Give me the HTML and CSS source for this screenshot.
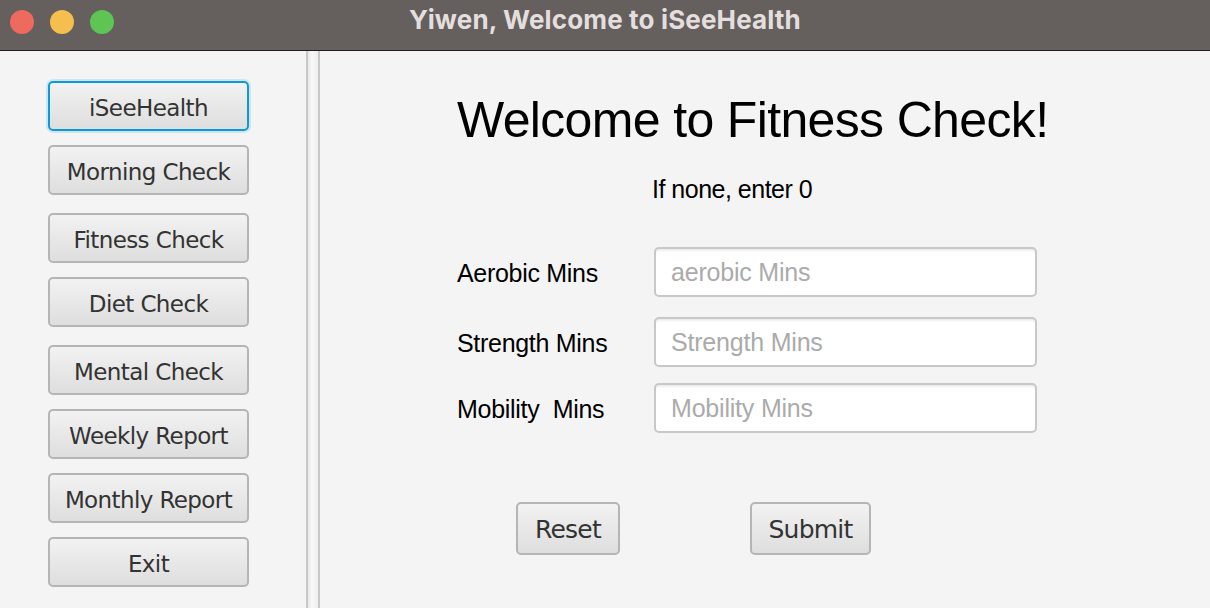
FILE: index.html
```html
<!DOCTYPE html>
<html>
<head>
<meta charset="utf-8">
<link rel="stylesheet" href="styles.css">
</head>
<body>
<div class="window">
  <header class="titlebar">
    <div class="lights">
      <span class="light red"></span>
      <span class="light yellow"></span>
      <span class="light green"></span>
    </div>
    <div class="title">Yiwen, Welcome to iSeeHealth</div>
  </header>
  <div class="body">
    <nav class="sidebar">
      <button class="nav-btn focused">iSeeHealth</button>
      <button class="nav-btn">Morning Check</button>
      <button class="nav-btn wide-gap">Fitness Check</button>
      <button class="nav-btn">Diet Check</button>
      <button class="nav-btn wide-gap">Mental Check</button>
      <button class="nav-btn">Weekly Report</button>
      <button class="nav-btn">Monthly Report</button>
      <button class="nav-btn">Exit</button>
    </nav>
    <div class="divider"></div>
    <main class="main">
      <h1 class="heading">Welcome to Fitness Check!</h1>
      <p class="hint">If none, enter 0</p>
      <div class="form">
        <div class="row">
          <label class="label">Aerobic Mins</label>
          <input class="field" placeholder="aerobic Mins">
        </div>
        <div class="row gap-20">
          <label class="label">Strength Mins</label>
          <input class="field" placeholder="Strength Mins">
        </div>
        <div class="row gap-16">
          <label class="label">Mobility&nbsp; Mins</label>
          <input class="field" placeholder="Mobility Mins">
        </div>
      </div>
      <div class="actions">
        <button class="act-btn reset">Reset</button>
        <button class="act-btn submit">Submit</button>
      </div>
    </main>
  </div>
</div>
</body>
</html>
```
FILE: styles.css
```css
* { box-sizing: border-box; }
html, body { margin: 0; padding: 0; }
body {
  width: 1210px;
  height: 608px;
  overflow: hidden;
  background: #f4f4f4;
  font-family: "Liberation Sans", Arial, sans-serif;
}
.window { display: flex; flex-direction: column; height: 608px; }
.titlebar {
  height: 51px;
  background: #655f5d;
  border-bottom: 1px solid #1e1e1e;
  display: flex;
  align-items: center;
  position: relative;
  flex: none;
}
.lights { display: flex; gap: 16px; padding-left: 10px; margin-top: -7px; }
.light { width: 24px; height: 24px; border-radius: 50%; display: block; }
.red { background: #ee6a5e; }
.yellow { background: #f5be4f; }
.green { background: #5ec454; }
.title {
  position: absolute;
  left: 0; right: 0; top: 4px;
  text-align: center;
  font-family: Inter, "Liberation Sans", sans-serif;
  font-weight: 700;
  font-size: 26px;
  letter-spacing: 0.15px;
  color: #e4dfde;
}
.body { flex: 1; display: flex; }
.sidebar {
  width: 306px;
  flex: none;
  display: flex;
  flex-direction: column;
  align-items: flex-start;
  padding: 30px 0 0 48px;
  gap: 14px;
}
.nav-btn {
  width: 201px;
  height: 50px;
  border: 2px solid #b5b5b5;
  border-radius: 5px;
  background: linear-gradient(#f2f2f2, #dedede);
  font-family: "DejaVu Sans", sans-serif;
  font-size: 23px;
  color: #333;
  letter-spacing: -0.6px;
  padding: 3px 0 0;
}
.nav-btn.wide-gap { margin-top: 4px; }
.nav-btn.focused {
  border-color: #0c9ad7;
  box-shadow: 0 0 0 2px #cfe6f2;
}
.divider {
  width: 14px;
  flex: none;
  border-left: 2px solid #c8c8c8;
  border-right: 2px solid #c8c8c8;
  background: linear-gradient(90deg, #e8e8e8, #f8f8f8 40%, #eeeeee);
}
.main {
  flex: 1;
  padding: 38px 0 0 137px;
  display: flex;
  flex-direction: column;
  align-items: flex-start;
}
.heading {
  margin: 0;
  font-weight: 400;
  font-size: 50px;
  line-height: 62px;
  color: #000;
  letter-spacing: -0.65px;
}
.hint {
  margin: 24px 0 0 195px;
  font-size: 25px;
  line-height: 28px;
  letter-spacing: -0.5px;
  color: #000;
}
.form {
  margin-top: 44px;
  display: flex;
  flex-direction: column;
}
.row {
  display: flex;
  align-items: center;
  height: 50px;
}
.row.gap-20 { margin-top: 20px; }
.row.gap-16 { margin-top: 16px; }
.label {
  width: 197px;
  padding-top: 2px;
  font-size: 25px;
  letter-spacing: -0.3px;
  color: #000;
}
.field {
  width: 383px;
  height: 50px;
  border: 2px solid #c8c8c8;
  border-radius: 5px;
  background: #fff;
  box-shadow: inset 0 3px 3px -2px rgba(0,0,0,0.12);
  padding: 0 15px;
  font-family: "Liberation Sans", Arial, sans-serif;
  font-size: 25px;
  letter-spacing: -0.2px;
  outline: none;
}
.field::placeholder { color: #ababab; }
.actions {
  margin-top: 69px;
  margin-left: 59px;
  display: flex;
  gap: 130px;
}
.act-btn {
  height: 53px;
  border: 2px solid #b5b5b5;
  border-radius: 5px;
  background: linear-gradient(#f2f2f2, #dedede);
  font-family: "DejaVu Sans", sans-serif;
  font-size: 25px;
  color: #333;
  letter-spacing: -0.8px;
  padding: 2px 0 0;
}
.reset { width: 104px; }
.submit { width: 121px; }
```
